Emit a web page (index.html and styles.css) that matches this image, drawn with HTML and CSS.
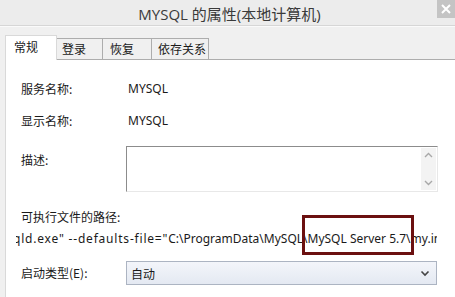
FILE: index.html
```html
<!DOCTYPE html>
<html lang="zh-CN">
<head>
    <meta charset="UTF-8">
    <title>MYSQL 的属性(本地计算机)</title>
    <link rel="stylesheet" href="styles.css">
</head>
<body>
    <div class="window">
        <!-- Title bar -->
        <div class="titlebar">
            <span class="title">MYSQL 的属性(本地计算机)</span>
            <span class="close">
                <svg width="10" height="10" viewBox="0 0 10 10"><path d="M1 1L9 9M9 1L1 9" stroke="#fff" stroke-width="2"/></svg>
            </span>
        </div>

        <div class="dialog">
            <!-- Tabs -->
            <div class="tabs">
                <div class="tab active">常规</div>
                <div class="tab tab-login">登录</div>
                <div class="tab tab-recovery">恢复</div>
                <div class="tab tab-deps">依存关系</div>
            </div>

            <!-- General page -->
            <div class="panel">
                <div class="row first">
                    <span class="label">服务名称:</span>
                    <span class="value">MYSQL</span>
                </div>
                <div class="row">
                    <span class="label">显示名称:</span>
                    <span class="value">MYSQL</span>
                </div>
                <div class="row desc-row">
                    <span class="label desc-label">描述:</span>
                    <div class="textarea">
                        <div class="scrollbar">
                            <svg width="9" height="6" viewBox="0 0 9 6"><path d="M1 5L4.5 1.5L8 5" fill="none" stroke="#a8a8a8" stroke-width="1.4"/></svg>
                            <svg width="9" height="6" viewBox="0 0 9 6"><path d="M1 1L4.5 4.5L8 1" fill="none" stroke="#a8a8a8" stroke-width="1.4"/></svg>
                        </div>
                    </div>
                </div>

                <div class="path-label">可执行文件的路径:</div>
                <div class="path">
                    <span class="path-text"><span class="path-head">qld.exe" --defaults-file="</span>C:\ProgramData\MySQL\<span class="mark">MySQL Server 5.7\</span>my.ini" MySQL</span>
                </div>

                <div class="row start-row">
                    <span class="label">启动类型(E):</span>
                    <div class="select">
                        <span>自动</span>
                        <svg width="10" height="7" viewBox="0 0 10 7"><path d="M1.5 1.5L5 5L8.5 1.5" fill="none" stroke="#444" stroke-width="1.6"/></svg>
                    </div>
                </div>
            </div>
        </div>
    </div>
</body>
</html>
```

FILE: styles.css
```css
/* General */
html, body {
    margin: 0;
    padding: 0;
}

body {
    width: 455px;
    height: 297px;
    overflow: hidden;
    font-family: "Noto Sans", "Noto Sans CJK SC", sans-serif;
    font-size: 12px;
    color: #1a1a1a;
    background-color: #f0f0f0;
}

.window {
    display: flex;
    flex-direction: column;
    height: 297px;
}

/* Title bar */
.titlebar {
    position: relative;
    height: 25px;
    display: flex;
    align-items: center;
    justify-content: center;
    background-color: #ececec;
    border-bottom: 1px solid #d6d6d6;
    box-shadow: 0 1px 0 #fafafa;
}

.title {
    font-family: "Open Sans", "Noto Sans CJK SC", sans-serif;
    font-size: 15px;
    color: #3a3a3a;
    margin: 1px 0 0 4px;
}

.close {
    position: absolute;
    top: 0;
    right: 0;
    width: 18px;
    height: 18px;
    display: flex;
    align-items: center;
    justify-content: center;
    background-color: #c4c4c4;
}

/* Dialog */
.dialog {
    flex: 1;
    display: flex;
    flex-direction: column;
    padding: 9px 0 0 5px;
}

.tabs {
    display: flex;
    align-items: flex-end;
    height: 24px;
}

.tab {
    box-sizing: border-box;
    height: 21px;
    line-height: 20px;
    background-color: #f0f0f0;
    border: 1px solid #adadad;
    border-bottom: none;
    font-family: "Noto Sans CJK SC", sans-serif;
    margin-left: -1px;
    white-space: nowrap;
}

.tab-login { width: 47px; padding-left: 5px; }
.tab-recovery { width: 50px; padding-left: 7px; }
.tab-deps { width: 58px; padding-left: 6px; }

.tab.active {
    position: relative;
    z-index: 1;
    width: 52px;
    height: 25px;
    line-height: 22px;
    padding-left: 8px;
    margin: 0 0 -1px 0;
    background-color: #fff;
    border-color: #d9d9d9;
}

.panel {
    flex: 1;
    background-color: #fff;
    border-top: 1px solid #adadad;
    border-left: 1px solid #d9d9d9;
    padding-left: 15px;
}

/* Rows */
.row {
    display: flex;
    align-items: center;
    margin-top: 16px;
}

.row.first {
    margin-top: 21px;
}

.label {
    width: 105px;
    flex-shrink: 0;
    line-height: 16px;
    font-family: "Noto Sans CJK SC", sans-serif;
}

.value {
    line-height: 16px;
    padding-left: 2px;
}

.desc-row {
    align-items: flex-start;
    margin-top: 17px;
}

.desc-label {
    margin-top: 6px;
}

.textarea {
    width: 310px;
    height: 44px;
    border: 1px solid #8c8c8c;
    border-right-color: #e8e8e8;
    border-bottom-color: #e8e8e8;
    display: flex;
    justify-content: flex-end;
}

.scrollbar {
    width: 15px;
    margin: 1px 1px 1px 0;
    background-color: #f3f3f3;
    display: flex;
    flex-direction: column;
    justify-content: space-between;
    align-items: center;
    padding: 4px 0;
    box-sizing: border-box;
}

.path-label {
    margin-top: 17px;
    line-height: 16px;
    font-family: "Noto Sans CJK SC", sans-serif;
}

/* Path line, clipped left and right like the read-only field */
.path {
    width: 421px;
    margin-top: 6px;
    margin-left: -5px;
    line-height: 16px;
    white-space: nowrap;
    overflow-x: clip;
    overflow-y: visible;
}

.path-text {
    display: inline-block;
    margin-left: -3px;
}

.path-head {
    letter-spacing: 0.8px;
}

/* Annotation box */
.mark {
    position: relative;
}

.mark::after {
    content: "";
    position: absolute;
    left: -6px;
    right: -3px;
    top: -15px;
    bottom: -8px;
    border: 3px solid #6b1010;
}

/* Start type */
.start-row {
    margin-top: 14px;
}

.select {
    width: 299px;
    height: 22px;
    display: flex;
    align-items: center;
    justify-content: space-between;
    padding: 0 6px 0 4px;
    border: 1px solid #acb4c2;
    background: linear-gradient(#f3f5fa, #e4e9f2);
    font-family: "Noto Sans CJK SC", sans-serif;
}
```
